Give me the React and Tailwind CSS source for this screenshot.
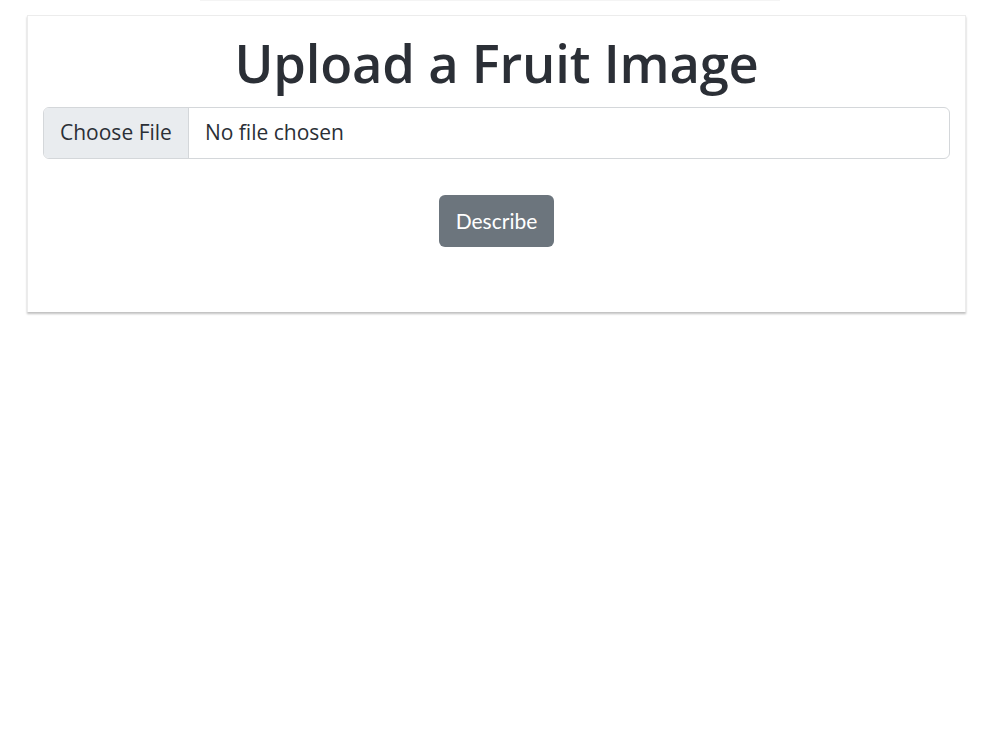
export default function App() {
  return (
    <div className="min-h-[750px] bg-white" style={{ fontFamily: '"Open Sans", "Noto Sans", sans-serif' }}>
      <div className="ml-[200px] w-[580px] h-px bg-[#f4f4f4]" />
      <div className="ml-[27px] mt-[14px] w-[939px] bg-white border-x border-t border-[#ececec] shadow-[0_2px_2px_rgba(0,0,0,0.25)] px-[15px] pt-[15px] pb-[65px]">
        <h1 className="text-center text-[52.5px] leading-[1.2] font-semibold text-[#2b2f36] tracking-[-0.2px]">
          Upload a Fruit Image
        </h1>
        <div className="mt-[13px] flex h-[52px] rounded-[6px] border border-[#d4d7da] overflow-hidden text-[21px] text-[#2b2f36]">
          <div className="flex items-center px-[16px] bg-[#e9ecef] border-r border-[#d4d7da]">Choose File</div>
          <div className="flex items-center px-[16px]">No file chosen</div>
        </div>
        <div className="mt-[36px] flex justify-center">
          <button
            className="h-[52px] px-[17px] rounded-[6px] bg-[#6c757d] text-white text-[21px]"
            style={{ fontFamily: 'Lato, "Open Sans", sans-serif' }}
          >
            Describe
          </button>
        </div>
      </div>
    </div>
  );
}
